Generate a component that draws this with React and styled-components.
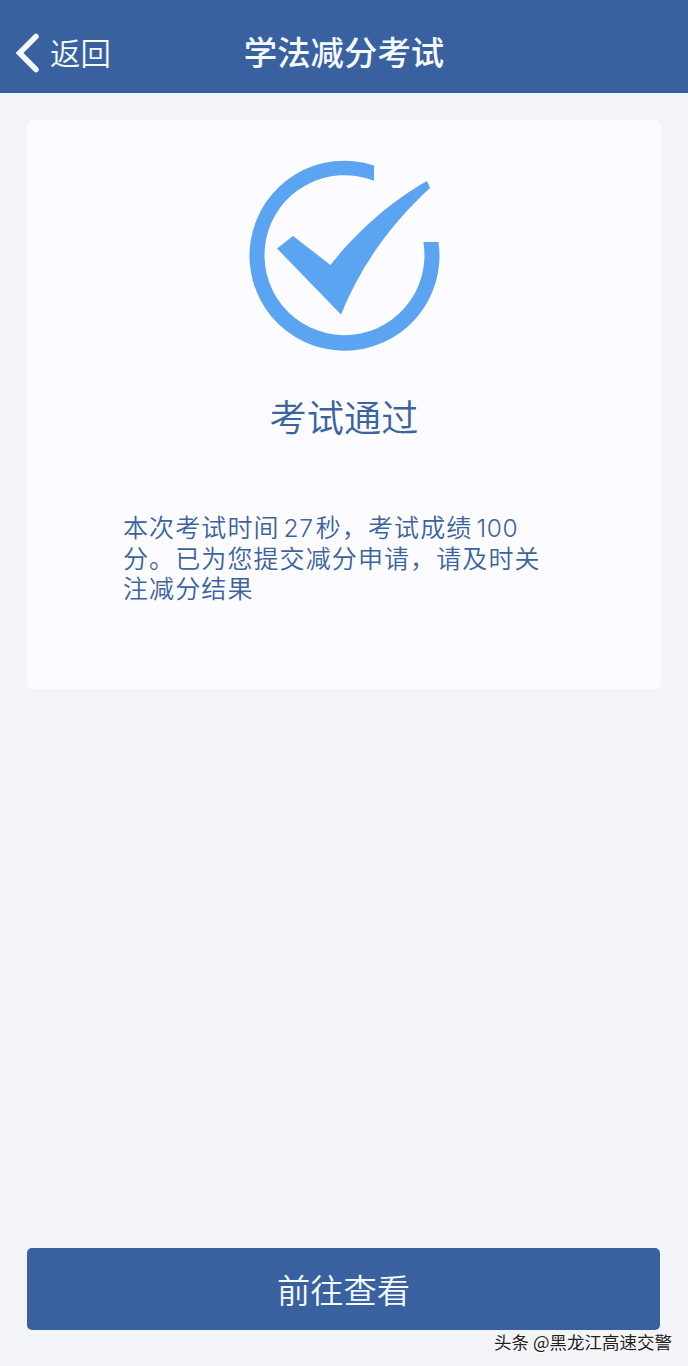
import React from 'react';
import styled, { createGlobalStyle } from 'styled-components';

const GlobalStyle = createGlobalStyle`
  * { box-sizing: border-box; }
  body {
    margin: 0;
    background: #f3f4f8;
    font-family: "Noto Sans CJK SC", sans-serif;
  }
`;

const Page = styled.div`
  position: relative;
  display: flex;
  flex-direction: column;
  height: 1366px;
  overflow: hidden;
`;

const Header = styled.header`
  display: grid;
  grid-template-columns: 1fr auto 1fr;
  align-items: center;
  height: 93px;
  padding: 12px 15px 0;
  background: #3961a0;
  color: #f4faff;
`;

const BackButton = styled.button`
  display: flex;
  align-items: center;
  gap: 10px;
  padding: 0;
  border: 0;
  background: none;
  color: inherit;
  font: 350 30.4px/40px "Noto Sans CJK SC", sans-serif;
`;

const BackLabel = styled.span`
  margin-top: -2px;
`;

const Chevron = styled.svg`
  display: block;
  width: 25px;
  height: 40px;
`;

const Title = styled.h1`
  margin: -3px 0 0;
  font-size: 33.4px;
  font-weight: 500;
  line-height: 40px;
`;

const Card = styled.main`
  display: flex;
  flex-direction: column;
  align-items: center;
  height: 569px;
  margin: 27px 27px 0;
  padding-top: 40px;
  border-radius: 6px;
  background: #fcfbff;
  color: #3b649c;
`;

const ResultIcon = styled.svg`
  display: block;
  width: 190px;
  height: 191px;
  overflow: visible;
`;

const ResultTitle = styled.h2`
  margin: 40px 0 0;
  font-size: 37.2px;
  font-weight: 350;
  line-height: 50px;
`;

const Message = styled.p`
  width: 442px;
  margin: 70px 0 0;
  font-size: 25px;
  font-weight: 350;
  line-height: 30.5px;
  letter-spacing: 1.1px;
  white-space: nowrap;
`;

const Line = styled.span`
  display: block;
`;

const Num = styled.span`
  margin: 0 2px 0 4px;
  font-family: Inter, sans-serif;
  font-size: 24.5px;
  font-weight: 350;
  line-height: 1;
  letter-spacing: 0.7px;
`;

const Footer = styled.footer`
  margin: auto 28px 36px 27px;
`;

const PrimaryButton = styled.button`
  display: block;
  width: 100%;
  height: 82px;
  padding: 0;
  border: 0;
  border-radius: 5px;
  background: #3961a0;
  color: #f4faff;
  font: 350 33.3px/80px "Noto Sans CJK SC", sans-serif;
`;

const Watermark = styled.div`
  position: absolute;
  right: 16px;
  bottom: 12px;
  color: #222;
  font-size: 17.5px;
  line-height: 24px;
  white-space: nowrap;
  text-shadow: 1px 1px 0 #fff;
`;

export default function App() {
  return (
    <Page>
      <GlobalStyle />
      <Header>
        <BackButton>
          <Chevron viewBox="0 0 25 40" fill="none" stroke="currentColor" strokeWidth="5.5" strokeLinecap="round" strokeLinejoin="miter">
            <path d="M21 3.500 4.500 20 21 36.500" />
          </Chevron>
          <BackLabel>返回</BackLabel>
        </BackButton>
        <Title>学法减分考试</Title>
      </Header>
      <Card>
        <ResultIcon viewBox="249 160 190 191" fill="#5aa4f1">
          <path d="M374 165.400A95 95 0 1 0 438.500 242H423.400A80 80 0 1 1 374 180.800Z" />
          <path d="M277 248.500 293 236 330.500 265C357 231 393 200 427 181L430 188C391 224 361 265 341 314.500Z" />
        </ResultIcon>
        <ResultTitle>考试通过</ResultTitle>
        <Message>
          <Line>本次考试时间<Num>27</Num>秒，考试成绩<Num>100</Num></Line>
          <Line>分。已为您提交减分申请，请及时关</Line>
          <Line>注减分结果</Line>
        </Message>
      </Card>
      <Footer>
        <PrimaryButton>前往查看</PrimaryButton>
      </Footer>
      <Watermark>头条 @黑龙江高速交警</Watermark>
    </Page>
  );
}
